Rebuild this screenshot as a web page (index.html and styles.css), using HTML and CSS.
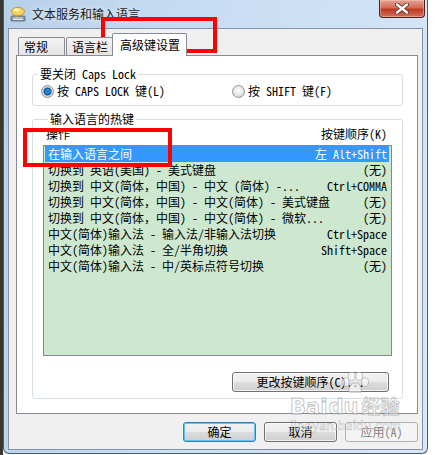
FILE: index.html
```html
<!DOCTYPE html>
<html lang="zh-CN">
<head>
  <meta charset="UTF-8" />
  <title>文本服务和输入语言</title>
  <link rel="stylesheet" href="styles.css">
</head>
<body>

<div class="window">
  <div class="titlebar">
    <svg class="app-icon" width="16" height="16" viewBox="0 0 16 16">
      <rect x="1" y="10" width="14" height="5" rx="1" fill="#8d9aa8" stroke="#56606c" stroke-width="0.8"/>
      <rect x="3" y="11.5" width="10" height="1" fill="#dfe6ee"/>
      <rect x="3" y="13" width="10" height="1" fill="#dfe6ee"/>
      <ellipse cx="8" cy="5.5" rx="6.5" ry="4.2" fill="#f6d35a" stroke="#b88d1c" stroke-width="0.8"/>
      <path d="M6 9 L5 11.5 L8.5 9.4 Z" fill="#f6d35a" stroke="#b88d1c" stroke-width="0.6"/>
      <ellipse cx="6.5" cy="4" rx="3" ry="1.4" fill="#fff3b8"/>
    </svg>
    <span class="title">文本服务和输入语言</span>
    <button class="close">
      <svg width="14" height="11" viewBox="0 0 14 11">
        <path d="M2 1.5 L12 9.5 M12 1.5 L2 9.5" stroke="#5a2a22" stroke-width="4" stroke-linecap="round"/>
        <path d="M2 1.5 L12 9.5 M12 1.5 L2 9.5" stroke="#ffffff" stroke-width="2.4" stroke-linecap="round"/>
      </svg>
    </button>
  </div>

  <div class="client">
    <div class="tabs">
      <div class="tab">常规</div>
      <div class="tab">语言栏</div>
      <div class="tab active">高级键设置</div>
    </div>

    <div class="page">
      <fieldset class="group caps">
        <legend>要关闭 Caps Lock</legend>
        <div class="radios">
          <label class="radio first"><span class="dot checked"></span>按 CAPS LOCK 键(L)</label>
          <label class="radio"><span class="dot"></span>按 SHIFT 键(F)</label>
        </div>
      </fieldset>

      <fieldset class="group hotkeys">
        <legend>输入语言的热键</legend>
        <div class="list-head">
          <span>操作</span>
          <span>按键顺序(K)</span>
        </div>
        <div class="list">
          <div class="row selected"><span>在输入语言之间</span><span>左 Alt+Shift</span></div>
          <div class="row"><span>切换到 英语(美国) - 美式键盘</span><span>(无)</span></div>
          <div class="row"><span>切换到 中文(简体，中国) - 中文 (简体) -...</span><span>Ctrl+COMMA</span></div>
          <div class="row"><span>切换到 中文(简体，中国) - 中文(简体) - 美式键盘</span><span>(无)</span></div>
          <div class="row"><span>切换到 中文(简体，中国) - 中文(简体) - 微软...</span><span>(无)</span></div>
          <div class="row"><span>中文(简体)输入法 - 输入法/非输入法切换</span><span>Ctrl+Space</span></div>
          <div class="row"><span>中文(简体)输入法 - 全/半角切换</span><span>Shift+Space</span></div>
          <div class="row"><span>中文(简体)输入法 - 中/英标点符号切换</span><span>(无)</span></div>
        </div>
        <div class="change-row">
          <button class="btn change">更改按键顺序(C)...</button>
        </div>
      </fieldset>
    </div>

    <div class="actions">
      <button class="btn default">确定</button>
      <button class="btn">取消</button>
      <button class="btn" disabled>应用(A)</button>
    </div>
  </div>
</div>

<!-- annotations drawn on the screenshot -->
<div class="mark mark-tab"></div>
<div class="mark mark-row"></div>

<div class="watermark">
  <svg class="paw" width="30" height="22" viewBox="0 0 34 26">
    <g fill="rgba(255,255,255,0.55)" stroke="rgba(120,120,120,0.45)" stroke-width="1">
      <ellipse cx="6" cy="12" rx="4" ry="5"/>
      <ellipse cx="13" cy="5" rx="4" ry="5"/>
      <ellipse cx="22" cy="5" rx="4" ry="5"/>
      <ellipse cx="29" cy="12" rx="4" ry="5"/>
      <path d="M10 24 C8 17 14 13 17 13 C21 13 26 17 24 24 Z"/>
    </g>
  </svg>
  <div class="brand">Bai<span class="du">du</span><span class="jy">经验</span></div>
  <div class="site">jingyan.baidu.com</div>
</div>

</body>
</html>
```

FILE: styles.css
```css
body {
  margin: 0;
  padding: 0;
  background: linear-gradient(to right, #3a3630 0, #3a3630 3px, #ffffff 3px);
  font-family: "Noto Sans Mono CJK SC", "Noto Sans CJK SC", sans-serif;
  font-size: 12px;
  color: #000;
  overflow: hidden;
}

/* Window frame */
.window {
  margin-left: 3px;
  width: 425px;
  height: 454px;
  box-sizing: border-box;
  border: 1px solid #4a5b70;
  border-top: none;
  border-radius: 0 0 6px 6px;
  background: linear-gradient(100deg, #b7d0ea 0%, #c9def4 45%, #d6e7f8 100%);
  padding: 0 4px 3px;
  display: flex;
  flex-direction: column;
}

.titlebar {
  height: 28px;
  margin: 0 -4px;
  padding-left: 6px;
  display: flex;
  align-items: flex-start;
}

.app-icon {
  margin-top: 6px;
}

.title {
  margin-left: 6px;
  margin-top: 6px;
  font-family: "Noto Sans CJK SC", sans-serif;
  font-size: 12px;
  line-height: 16px;
  color: #1a1a1a;
  text-shadow: 0 0 6px rgba(255, 255, 255, 0.9);
}

.close {
  margin-left: auto;
  margin-right: 2px;
  width: 46px;
  height: 18px;
  padding: 0;
  border: 1px solid #4d2019;
  border-top: none;
  border-radius: 0 0 4px 4px;
  background: linear-gradient(#e5a597 0%, #d36a57 45%, #bd3a22 55%, #d0705f 100%);
  display: flex;
  align-items: center;
  justify-content: center;
  box-shadow: inset 0 0 0 1px rgba(255, 200, 190, 0.5);
}

/* Client area */
.client {
  flex: 1;
  border: 1px solid #8592a3;
  background: #f0f0f0;
  padding: 4px 4px 0 7px;
  display: flex;
  flex-direction: column;
}

.tabs {
  height: 23px;
  margin-bottom: -1px;
  padding-left: 2px;
  display: flex;
  align-items: flex-end;
  position: relative;
  z-index: 1;
}

.tab {
  height: 18px;
  box-sizing: border-box;
  margin-bottom: 1px;
  padding: 0 5px;
  border: 1px solid #898c95;
  border-bottom: none;
  border-radius: 2px 2px 0 0;
  background: linear-gradient(#f3f3f3, #e4e4e4);
  line-height: 17px;
  width: 47px;
  overflow: hidden;
  white-space: nowrap;
}

.tab + .tab {
  margin-left: 1px;
}

.tab.active {
  height: 23px;
  width: 75px;
  margin: 0 0 0 -1px;
  padding: 0 7px;
  background: #ffffff;
  line-height: 22px;
}

.page {
  flex: 1;
  border: 1px solid #898c95;
  background: #ffffff;
  padding: 11px 14px 0 15px;
}

/* Group boxes */
.group {
  margin: 0;
  padding: 0;
  border: 1px solid #d5dfe5;
  border-radius: 3px;
  min-width: 0;
}

.group legend {
  margin-left: 5px;
  padding: 0 2px;
  line-height: 14px;
}

.radios {
  display: flex;
  padding: 3px 0 7px 8px;
  line-height: 14px;
}

.radio {
  display: flex;
  align-items: center;
  gap: 3px;
}

.radio.first {
  width: 191px;
}

.dot {
  width: 13px;
  height: 13px;
  box-sizing: border-box;
  border-radius: 50%;
  border: 1px solid #8f8f8f;
  background: radial-gradient(circle at 50% 40%, #fdfdfd 0, #e4e4e4 60%, #cfcfcf 100%);
  display: inline-block;
}

.dot.checked {
  background: radial-gradient(circle, #1d6fc3 0, #2d8ee2 2px, #0e4c8f 3.5px, #d8d8d8 4.5px, #f4f4f4 100%);
}

.hotkeys {
  margin-top: 6px;
  padding: 1px 10px 6px;
}

.list-head {
  height: 14px;
  line-height: 14px;
  margin-bottom: 4px;
  padding: 0 5px 0 3px;
  display: flex;
  justify-content: space-between;
}

.list {
  height: 211px;
  box-sizing: border-box;
  border: 1px solid #828790;
  background: #cde8cf;
}

.row {
  height: 16px;
  line-height: 16px;
  margin: 0 2px 0 1px;
  padding: 0 2px 0 3px;
  display: flex;
  justify-content: space-between;
  white-space: nowrap;
}

.row.selected {
  background: #3399ff;
  color: #ffffff;
}

.change-row {
  margin-top: 16px;
  display: flex;
  justify-content: flex-end;
  padding-right: 3px;
}

/* Buttons */
.btn {
  height: 20px;
  box-sizing: border-box;
  padding: 0;
  border: 1px solid #707070;
  border-radius: 3px;
  background: linear-gradient(#f2f2f2 0%, #ebebeb 50%, #dddddd 50%, #cfcfcf 100%);
  font-family: "Noto Sans Mono CJK SC", "Noto Sans CJK SC", sans-serif;
  font-size: 12px;
  line-height: 18px;
  color: #000;
  width: 73px;
  box-shadow: inset 0 0 0 1px rgba(255, 255, 255, 0.7);
}

.btn.change {
  width: 157px;
}

.btn.default {
  border-color: #3c7fb1;
  box-shadow: inset 0 0 0 1px #5fc4f2;
}

.btn:disabled {
  border-color: #adb2b5;
  background: #f4f4f4;
  color: #838383;
  box-shadow: none;
}

.actions {
  margin-top: 8px;
  height: 20px;
  padding-bottom: 7px;
  padding-right: 0;
  display: flex;
  justify-content: flex-end;
  gap: 8px;
}

/* Red annotation boxes */
.mark {
  position: absolute;
  border: 4px solid #ff0000;
  box-sizing: border-box;
  pointer-events: none;
}

.mark-tab {
  left: 101px;
  top: 17px;
  width: 116px;
  height: 36px;
}

.mark-row {
  left: 23px;
  top: 128px;
  width: 149px;
  height: 39px;
}

/* Watermark */
.watermark {
  position: absolute;
  left: 290px;
  top: 372px;
  width: 125px;
  pointer-events: none;
  white-space: nowrap;
}

.paw {
  display: block;
  margin-left: 50px;
}

.brand {
  font-family: "DejaVu Sans", sans-serif;
  font-weight: bold;
  font-size: 21px;
  line-height: 24px;
  color: rgba(255, 255, 255, 0.55);
  -webkit-text-stroke: 1px rgba(120, 120, 120, 0.45);
}

.brand .du {
  margin-left: 1px;
}

.brand .jy {
  margin-left: 3px;
  font-family: "Noto Sans CJK SC", sans-serif;
  font-size: 19px;
}

.site {
  font-family: "DejaVu Sans", sans-serif;
  font-size: 12px;
  line-height: 14px;
  color: rgba(255, 255, 255, 0.6);
  -webkit-text-stroke: 0.5px rgba(120, 120, 120, 0.45);
}
```
